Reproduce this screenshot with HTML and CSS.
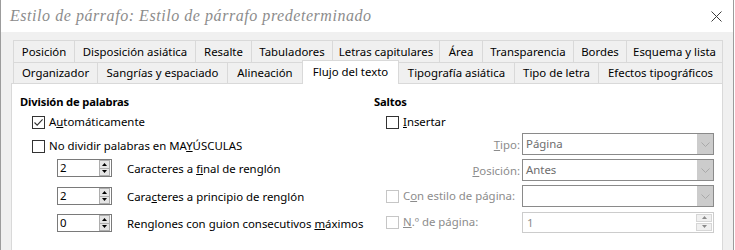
FILE: index.html
```html
<!DOCTYPE html>
<html lang="es">
<head>
<meta charset="utf-8">
<title>Estilo de párrafo</title>
<link rel="stylesheet" href="styles.css">
</head>
<body>
<div class="window">
  <div class="titlebar">
    <span class="title">Estilo de párrafo: Estilo de párrafo predeterminado</span>
    <svg class="close" width="11" height="11" viewBox="0 0 11 11"><path d="M0.5 0.5 L10.5 10.5 M10.5 0.5 L0.5 10.5" stroke="#3c3c3c" stroke-width="1" fill="none"/></svg>
  </div>
  <div class="dialog">
    <div class="tabs">
      <div class="tabrow row1">
        <div class="tab">Posición</div>
        <div class="tab">Disposición asiática</div>
        <div class="tab">Resalte</div>
        <div class="tab">Tabuladores</div>
        <div class="tab">Letras capitulares</div>
        <div class="tab">Área</div>
        <div class="tab">Transparencia</div>
        <div class="tab">Bordes</div>
        <div class="tab">Esquema y lista</div>
      </div>
      <div class="tabrow row2">
        <div class="tab">Organizador</div>
        <div class="tab">Sangrías y espaciado</div>
        <div class="tab">Alineación</div>
        <div class="tab active">Flujo del texto</div>
        <div class="tab">Tipografía asiática</div>
        <div class="tab">Tipo de letra</div>
        <div class="tab">Efectos tipográficos</div>
      </div>
    </div>
    <div class="panel">
      <div class="col col-left">
        <div class="heading">División de palabras</div>
        <label class="check first">
          <span class="box"><svg width="11" height="11" viewBox="0 0 11 11"><path d="M1.5 5.5 L4.2 8.2 L9.6 2.4" stroke="#333" stroke-width="1.1" fill="none"/></svg></span>
          <span>A<u>u</u>tomáticamente</span>
        </label>
        <label class="check second">
          <span class="box"></span>
          <span>No dividir palabras en MA<u>Y</u>ÚSCULAS</span>
        </label>
        <div class="spinrow s1">
          <div class="spin">
            <span class="val">2</span>
            <span class="btns">
              <span class="btn"><svg width="5" height="3" viewBox="0 0 5 3"><path d="M0 3 L2.5 0 L5 3 Z" fill="#000"/></svg></span>
              <span class="btn"><svg width="5" height="3" viewBox="0 0 5 3"><path d="M0 0 L2.5 3 L5 0 Z" fill="#000"/></svg></span>
            </span>
          </div>
          <span class="spinlabel">Caracteres a <u>f</u>inal de renglón</span>
        </div>
        <div class="spinrow s2">
          <div class="spin">
            <span class="val">2</span>
            <span class="btns">
              <span class="btn"><svg width="5" height="3" viewBox="0 0 5 3"><path d="M0 3 L2.5 0 L5 3 Z" fill="#000"/></svg></span>
              <span class="btn"><svg width="5" height="3" viewBox="0 0 5 3"><path d="M0 0 L2.5 3 L5 0 Z" fill="#000"/></svg></span>
            </span>
          </div>
          <span class="spinlabel">Cara<u>c</u>teres a principio de renglón</span>
        </div>
        <div class="spinrow s3">
          <div class="spin">
            <span class="val">0</span>
            <span class="btns">
              <span class="btn"><svg width="5" height="3" viewBox="0 0 5 3"><path d="M0 3 L2.5 0 L5 3 Z" fill="#000"/></svg></span>
              <span class="btn"><svg width="5" height="3" viewBox="0 0 5 3"><path d="M0 0 L2.5 3 L5 0 Z" fill="#000"/></svg></span>
            </span>
          </div>
          <span class="spinlabel">Renglones con guion consecutivos <u>m</u>áximos</span>
        </div>
      </div>
      <div class="col col-right">
        <div class="heading">Saltos</div>
        <label class="check first">
          <span class="box"></span>
          <span><u>I</u>nsertar</span>
        </label>
        <div class="breaks">
          <span class="flabel"><u>T</u>ipo:</span>
          <div class="combo"><span class="val">Página</span><span class="drop"><svg width="9" height="5" viewBox="0 0 9 5"><path d="M0.5 0.5 L4.5 4.5 L8.5 0.5" stroke="#a9a9a9" stroke-width="1" fill="none"/></svg></span></div>

          <span class="flabel"><u>P</u>osición:</span>
          <div class="combo"><span class="val">Antes</span><span class="drop"><svg width="9" height="5" viewBox="0 0 9 5"><path d="M0.5 0.5 L4.5 4.5 L8.5 0.5" stroke="#a9a9a9" stroke-width="1" fill="none"/></svg></span></div>

          <label class="check disabled inrow"><span class="box"></span><span>C<u>o</u>n estilo de página:</span></label>
          <div class="combo"><span class="val"></span><span class="drop"><svg width="9" height="5" viewBox="0 0 9 5"><path d="M0.5 0.5 L4.5 4.5 L8.5 0.5" stroke="#a9a9a9" stroke-width="1" fill="none"/></svg></span></div>

          <label class="check disabled inrow"><span class="box"></span><span><u>N</u>.º de página:</span></label>
          <div class="spin wide disabled">
            <span class="val">1</span>
            <span class="btns">
              <span class="btn"><svg width="5" height="3" viewBox="0 0 5 3"><path d="M0 3 L2.5 0 L5 3 Z" fill="#8a8a8a"/></svg></span>
              <span class="btn"><svg width="5" height="3" viewBox="0 0 5 3"><path d="M0 0 L2.5 3 L5 0 Z" fill="#8a8a8a"/></svg></span>
            </span>
          </div>
        </div>
      </div>
    </div>
  </div>
</div>
</body>
</html>
```
FILE: styles.css
```css
* { box-sizing: border-box; }
html, body { margin: 0; padding: 0; }
body {
  width: 735px;
  height: 250px;
  overflow: hidden;
  background: #ffffff;
  font-family: "Noto Sans", "Open Sans", sans-serif;
  font-size: 11.4px;
  color: #000;
}
.window {
  width: 734px;
  height: 250px;
  border-left: 1px solid #9c9c9c;
  border-right: 1px solid #9c9c9c;
  background: #f0f0f0;
  overflow: hidden;
}
.titlebar {
  height: 32px;
  background: #ffffff;
  display: flex;
  align-items: center;
  justify-content: space-between;
  padding: 0 11px 0 9px;
}
.title {
  font-family: "Liberation Serif", serif;
  font-style: italic;
  font-size: 16px;
  letter-spacing: 0.55px;
  color: #8c8c8c;
}
.close { display: block; }

.dialog {
  padding: 8px 11px 0 10px;
}
.tabs {
  padding-left: 2px;
}
.tabrow {
  display: flex;
  align-items: flex-start;
}
.tab {
  flex: none;
  border-top: 1px solid #d9d9d9;
  border-left: 1px solid #d9d9d9;
  text-align: center;
  white-space: nowrap;
  background: #f0f0f0;
}
.tab:last-child { border-right: 1px solid #d9d9d9; }
.row1 .tab { height: 22px; line-height: 21px; }
.row2 .tab { height: 21px; line-height: 20px; }
.row2 .tab.active {
  position: relative;
  z-index: 2;
  height: 24px;
  margin-top: -2px;
  margin-bottom: -3px;
  line-height: 22px;
  background: #ffffff;
  border-right: 1px solid #d9d9d9;
  margin-right: -1px;
}
.row1 .tab:nth-child(1) { width: 61px; }
.row1 .tab:nth-child(2) { width: 121px; }
.row1 .tab:nth-child(3) { width: 56px; }
.row1 .tab:nth-child(4) { width: 81px; }
.row1 .tab:nth-child(5) { width: 107px; }
.row1 .tab:nth-child(6) { width: 43px; }
.row1 .tab:nth-child(7) { width: 91px; }
.row1 .tab:nth-child(8) { width: 53px; }
.row1 .tab:nth-child(9) { width: 97px; }
.row2 .tab:nth-child(1) { width: 84px; }
.row2 .tab:nth-child(2) { width: 130px; }
.row2 .tab:nth-child(3) { width: 75px; }
.row2 .tab:nth-child(4) { width: 97px; }
.row2 .tab:nth-child(5) { width: 116px; }
.row2 .tab:nth-child(6) { width: 84px; }
.row2 .tab:nth-child(7) { width: 125px; }

.panel {
  width: 712px;
  height: 200px;
  background: #ffffff;
  border: 1px solid #d9d9d9;
  display: flex;
  padding: 10px 8px 0 8px;
}
.col-left { width: 354px; }
.col-right { flex: 1; }
.heading {
  font-weight: bold;
  font-size: 11.2px;
  letter-spacing: -0.15px;
  height: 16px;
  line-height: 16px;
}
.check {
  display: flex;
  align-items: center;
  height: 16px;
  line-height: 16px;
  white-space: nowrap;
}
.check.first { margin-top: 4px; margin-left: 12px; }
.check.second { margin-top: 8px; margin-left: 12px; }
.box {
  width: 13px;
  height: 13px;
  border: 1px solid #333333;
  background: #fff;
  margin-right: 4px;
  display: flex;
  align-items: center;
  justify-content: center;
  flex: none;
}
.box svg { display: block; }
.check.disabled { color: #8c8c8c; }
.check.disabled .box { border-color: #c6c6c6; }

.spinrow {
  display: flex;
  align-items: center;
  margin-left: 37px;
  height: 18px;
}
.spinrow.s1 { margin-top: 5px; }
.spinrow.s2 { margin-top: 10px; }
.spinrow.s3 { margin-top: 9px; }
.spin {
  width: 55px;
  height: 18px;
  border: 1px solid #7a7a7a;
  background: #fff;
  display: flex;
  flex: none;
}
.spin .val {
  flex: 1;
  padding-left: 2px;
  line-height: 16px;
}
.spin .btns {
  width: 11px;
  margin: 0 1px 0 0;
  display: flex;
  flex-direction: column;
  gap: 0;
}
.spin .btn {
  flex: 1;
  background: #e5e5e5;
  border: 1px solid #adadad;
  display: flex;
  align-items: center;
  justify-content: center;
}
.spin .btn + .btn { border-top: none; }
.spin .btn svg { display: block; }
.spinlabel {
  margin-left: 15px;
  white-space: nowrap;
}

.breaks {
  margin-left: 12px;
  margin-top: 3px;
  display: grid;
  grid-template-columns: 134px 192px;
  column-gap: 2px;
  row-gap: 4px;
  align-items: center;
}
.flabel {
  text-align: right;
  color: #8c8c8c;
  white-space: nowrap;
}
.combo {
  height: 22px;
  border: 1px solid #8a8a8a;
  background: #fff;
  display: flex;
}
.combo .val {
  flex: 1;
  padding-left: 3px;
  line-height: 20px;
  color: #6d6d6d;
}
.combo .drop {
  width: 16px;
  background: #cccccc;
  display: flex;
  align-items: center;
  justify-content: center;
}
.combo .drop svg { display: block; }
.check.inrow { height: 22px; }
.spin.wide {
  width: 192px;
  height: 21px;
}
.spin.wide .val { line-height: 19px; padding-left: 4px; }
.spin.disabled { border-color: #cccccc; color: #8c8c8c; }
.spin.wide .btns { width: 16px; margin: 1px 1px 1px 0; gap: 1px; }
.spin.disabled .btn { background: #f0f0f0; border: 1px solid #d6d6d6; }
.spin.disabled .btn + .btn { border-top: 1px solid #d6d6d6; }
```
